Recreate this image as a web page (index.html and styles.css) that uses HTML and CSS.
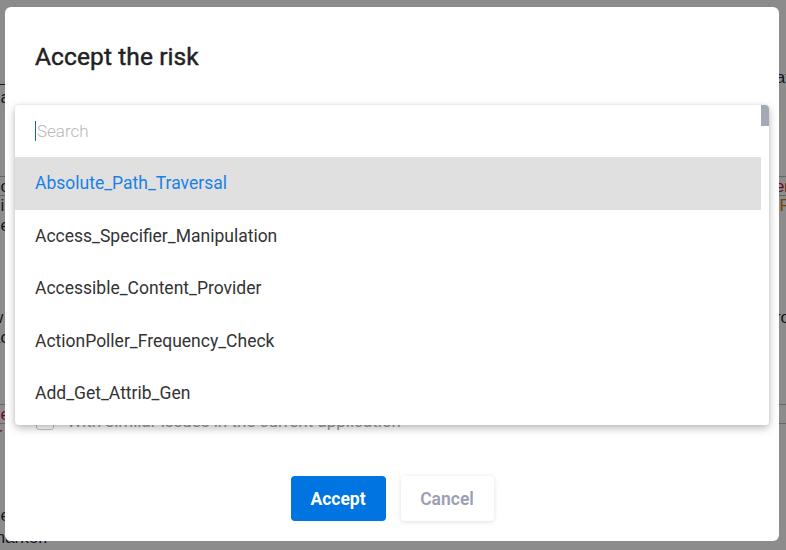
FILE: index.html
```html
<!DOCTYPE html>
<html lang="en">
<head>
<meta charset="utf-8">
<title>Accept the risk</title>
<link rel="stylesheet" href="styles.css">
</head>
<body>
<div class="page">
  <div class="bg-row r1"><span class="bl">2 ok</span><span class="br">at</span></div>
  <div class="bg-row r2"><span class="bl">da</span><span class="br"></span></div>
  <div class="bg-row r3 ruled"><span class="bl">po</span><span class="br red">er</span></div>
  <div class="bg-row r4"><span class="bl">ni</span><span class="br orange">F</span></div>
  <div class="bg-row r5"><span class="bl">ne</span><span class="br"></span></div>
  <div class="bg-row r6"><span class="bl">w</span><span class="br">ro</span></div>
  <div class="bg-row r7"><span class="bl">ac</span><span class="br"></span></div>
  <div class="bg-row r8 ruled"><span class="bl red">ue</span><span class="br"></span></div>
  <div class="bg-row r9"><span class="bl red">rr</span><span class="br"></span></div>
  <div class="bg-row r10"><span class="bl">ne</span><span class="br"></span></div>
  <div class="bg-row r11"><span class="bl">marker.</span><span class="br"></span></div>
</div>
<div class="overlay"></div>
<div class="dialog">
  <h2 class="title">Accept the risk</h2>
  <div class="body">
    <div class="select-field"><span class="arrow"></span></div>
    <label class="check-row"><span class="checkbox"></span><span class="check-text">With similar issues in the current application</span></label>
  </div>
  <div class="actions">
    <button class="btn btn-primary">Accept</button>
    <button class="btn btn-secondary">Cancel</button>
  </div>
  <div class="dropdown">
    <div class="dropdown-main">
      <div class="search"><span class="caret"></span><span class="placeholder">Search</span></div>
      <ul class="options">
        <li class="option active">Absolute_Path_Traversal</li>
        <li class="option">Access_Specifier_Manipulation</li>
        <li class="option">Accessible_Content_Provider</li>
        <li class="option">ActionPoller_Frequency_Check</li>
        <li class="option">Add_Get_Attrib_Gen</li>
        <li class="option">Add_Header_Gen</li>
      </ul>
    </div>
    <div class="scrollbar"><div class="thumb"></div></div>
  </div>
</div>
</body>
</html>
```

FILE: styles.css
```css
* { box-sizing: border-box; }
html, body { margin: 0; padding: 0; }
body {
  width: 786px;
  height: 550px;
  overflow: hidden;
  background: #ffffff;
  font-family: Roboto, "Liberation Sans", sans-serif;
}

.page {
  display: flex;
  flex-direction: column;
  padding-top: 68px;
  font-family: "Liberation Sans", Arial, sans-serif;
  font-size: 17px;
  color: #1d2a45;
}
.bg-row {
  display: flex;
  justify-content: space-between;
  height: 20px;
  line-height: 20px;
  margin-left: -9px;
  margin-right: -4px;
}
.bg-row .bl, .bg-row .br { white-space: nowrap; }
.r1 .bl { text-decoration: underline; }
.r3 { margin-top: 68px; }
.r6 { margin-top: 72px; }
.r8 { margin-top: 56px; }
.r10 { margin-top: 62px; }
.r11 { margin-top: 2px; }
.ruled { border-top: 1px solid #bbbbbb; border-bottom: 1px solid #bbbbbb; }
.red { color: #c8103c; }
.orange { color: #e07a00; }

.overlay {
  position: fixed;
  inset: 0;
  background: rgba(0, 0, 0, 0.45);
}

.dialog {
  position: fixed;
  left: 5px;
  top: 7px;
  width: 774px;
  height: 534px;
  background: #ffffff;
  border-radius: 6px;
  padding: 0 30px;
  display: flex;
  flex-direction: column;
}
.title {
  margin: 36px 0 0;
  font-size: 24.5px;
  line-height: 28px;
  font-weight: 400;
  -webkit-text-stroke: 0.45px #222222;
  letter-spacing: 0.1px;
  color: #222222;
}
.body {
  flex: 1;
  display: flex;
  flex-direction: column;
  padding-top: 36px;
}
.select-field {
  height: 40px;
  position: relative;
}
.arrow {
  position: absolute;
  right: 14px;
  top: 0;
  width: 8px;
  height: 4px;
  background: #c6c6c6;
  border-radius: 4px 4px 0 0;
}
.check-row {
  margin-top: 264px;
  display: flex;
  align-items: center;
  gap: 13px;
  padding-left: 1px;
}
.checkbox {
  width: 18px;
  height: 18px;
  border: 1.5px solid #c4c4c4;
  border-radius: 3px;
}
.check-text {
  font-size: 17px;
  color: #9a9a9a;
}
.actions {
  display: flex;
  justify-content: center;
  gap: 15px;
  padding-bottom: 20px;
}
.btn {
  height: 45px;
  border-radius: 4px;
  border: none;
  font-family: Roboto, "Liberation Sans", sans-serif;
  font-size: 17.5px;
  font-weight: 700;
  cursor: pointer;
}
.btn-primary {
  width: 95px;
  background: #0074e0;
  color: #ffffff;
}
.btn-secondary {
  width: 93px;
  background: #ffffff;
  color: #9c9eb4;
  font-weight: 600;
  box-shadow: 0 1px 5px rgba(0, 0, 0, 0.12);
}

.dropdown {
  position: absolute;
  left: 10px;
  top: 98px;
  width: 754px;
  height: 320px;
  background: #ffffff;
  border-radius: 4px;
  box-shadow: 0 3px 8px rgba(0, 0, 0, 0.28), 0 0 2px rgba(0, 0, 0, 0.1);
  display: flex;
  overflow: hidden;
}
.dropdown-main {
  flex: 1;
  display: flex;
  flex-direction: column;
  overflow: hidden;
}
.search {
  height: 52px;
  flex-shrink: 0;
  display: flex;
  align-items: center;
  padding-left: 20px;
  font-size: 17px;
  font-weight: 300;
  color: #b8b8b8;
}
.caret {
  width: 1px;
  height: 20px;
  background: #0a66c2;
  margin-right: 1px;
}
.options {
  list-style: none;
  margin: 0;
  padding: 0;
}
.option {
  height: 52.5px;
  display: flex;
  align-items: center;
  padding-left: 20px;
  font-size: 17.5px;
  color: #333333;
  white-space: nowrap;
}
.option.active {
  background: #e0e0e0;
  color: #1a80e6;
}
.scrollbar {
  width: 8px;
  flex-shrink: 0;
  background: #ffffff;
}
.thumb {
  height: 21px;
  background: #a3a9b8;
}
```
